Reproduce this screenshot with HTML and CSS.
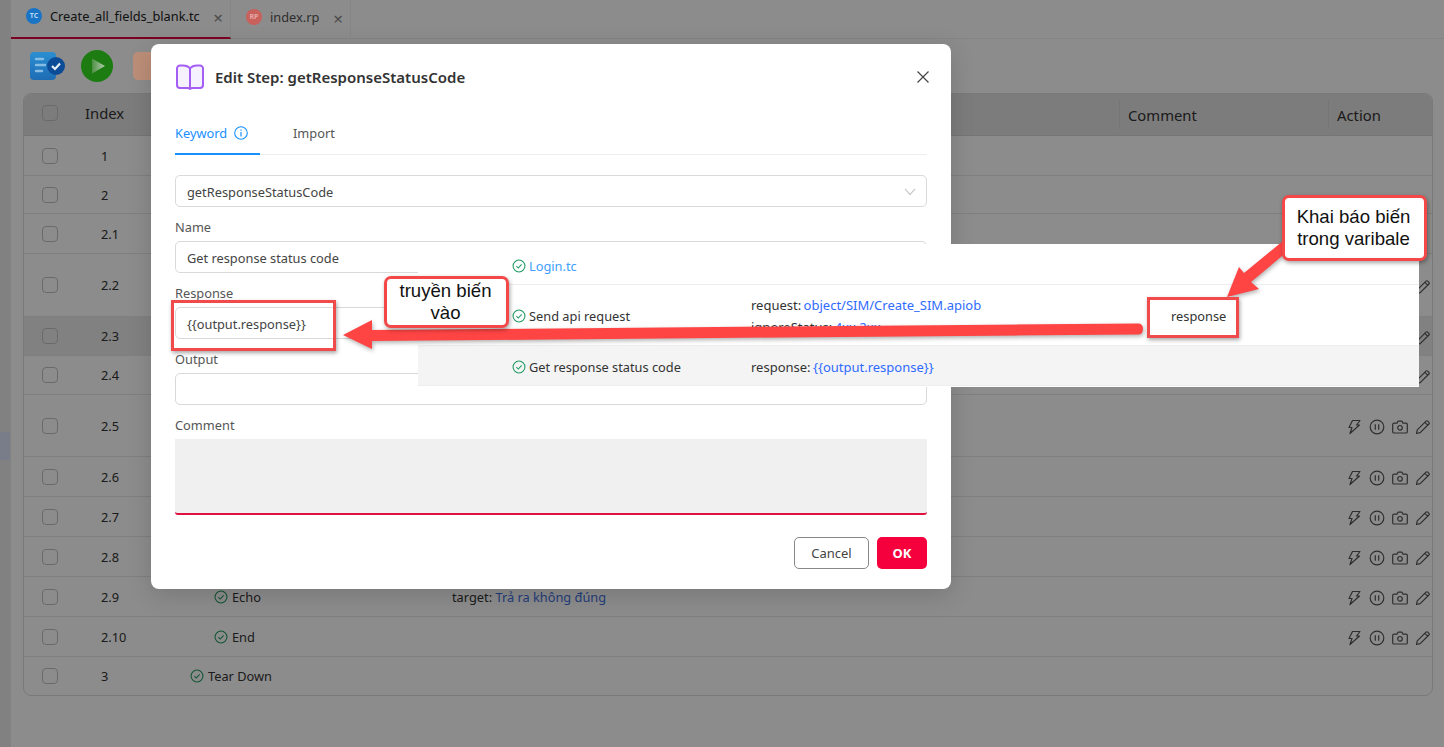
FILE: index.html
```html
<!DOCTYPE html>
<html lang="vi">
<head>
<meta charset="utf-8">
<title>Edit Step</title>
<link rel="stylesheet" href="styles.css">
</head>
<body>
<svg class="defs" width="0" height="0">
	<defs>
		<linearGradient id="play-fill" x1="0" y1="0" x2="1" y2="0">
			<stop offset="0" stop-color="#4e9044"/>
			<stop offset="1" stop-color="#b4ccb0"/>
		</linearGradient>
		<linearGradient id="doc-fill" x1="0" y1="0" x2="0" y2="1">
			<stop offset="0" stop-color="#2c8fd2"/>
			<stop offset="1" stop-color="#1e6cb4"/>
		</linearGradient>
	</defs>
	<symbol id="i-check" viewBox="0 0 16 16">
		<circle cx="8" cy="8" r="6.8" fill="none" stroke="currentColor" stroke-width="1.2"/>
		<path d="M5 8.2l2.2 2.2L11 6.2" fill="none" stroke="currentColor" stroke-width="1.2"/>
	</symbol>
	<symbol id="i-bolt" viewBox="0 0 16 16">
		<path d="M6.5 1.5H14L10.5 6h3L4 14.5l2-6H3z" fill="none" stroke="currentColor" stroke-width="1.2" stroke-linejoin="round"/>
	</symbol>
	<symbol id="i-pause" viewBox="0 0 16 16">
		<circle cx="8" cy="8" r="6.8" fill="none" stroke="currentColor" stroke-width="1.2"/>
		<path d="M6.3 5.2v5.6M9.7 5.2v5.6" fill="none" stroke="currentColor" stroke-width="1.2"/>
	</symbol>
	<symbol id="i-camera" viewBox="0 0 16 16">
		<path d="M2 4.2h3l1-2h4l1 2h3a1.3 1.3 0 0 1 1.300 1.300v7.200a1.300 1.300 0 0 1-1.300 1.300H2a1.300 1.300 0 0 1-1.300-1.300V5.500A1.300 1.300 0 0 1 2 4.200z" fill="none" stroke="currentColor" stroke-width="1.2" stroke-linejoin="round"/>
		<circle cx="8" cy="8.800" r="2.300" fill="none" stroke="currentColor" stroke-width="1.2"/>
	</symbol>
	<symbol id="i-pencil" viewBox="0 0 16 16">
		<path d="M1.500 14.500l.8-3.700 8.700-8.700a1.200 1.200 0 0 1 1.700 0l1.200 1.200a1.200 1.200 0 0 1 0 1.700l-8.700 8.700z M9.800 3.300l2.900 2.900" fill="none" stroke="currentColor" stroke-width="1.2" stroke-linejoin="round"/>
	</symbol>
</svg>

<div class="page">
	<aside class="side"><span class="side-mark"></span></aside>
	<main class="main">
		<nav class="tabs">
			<div class="tab tab-on">
				<span class="badge badge-tc">TC</span>
				<span>Create_all_fields_blank.tc</span>
				<span class="tab-x">×</span>
			</div>
			<div class="tab">
				<span class="badge badge-rp">RP</span>
				<span class="tab-off">index.rp</span>
				<span class="tab-x">×</span>
			</div>
		</nav>
		<div class="toolbar">
			<svg class="tool" width="36" height="30" viewBox="0 0 36 30">
				<rect x="0" y="1" width="26" height="28" rx="4" fill="url(#doc-fill)"/>
				<path d="M6 8h7M6 14h9M6 20h6" stroke="#86bde4" stroke-width="2.400" stroke-linecap="round"/>
				<circle cx="26" cy="15" r="9" fill="#0c4c96"/>
				<path d="M22 15l3 3 5-5.500" fill="none" stroke="#e8eef5" stroke-width="2.200"/>
			</svg>
			<svg class="tool" width="32" height="32" viewBox="0 0 32 32">
				<circle cx="16" cy="16" r="16" fill="#1c7c12"/>
				<path d="M11 8.500l13 7.500-13 7.500z" fill="url(#play-fill)"/>
			</svg>
			<span class="tool tool-box"></span>
		</div>
		<section class="grid">
			<div class="head">
				<div class="cell"><span class="box"></span></div>
				<div class="cell">Index</div>
				<div class="cell head-line">Comment</div>
				<div class="cell head-line">Action</div>
			</div>
			<div class="row"><div class="cell"><span class="box"></span></div><div class="cell idx">1</div></div>
			<div class="row h38"><div class="cell"><span class="box"></span></div><div class="cell idx">2</div></div>
			<div class="row"><div class="cell"><span class="box"></span></div><div class="cell idx">2.1</div></div>
			<div class="row h63">
				<div class="cell"><span class="box"></span></div><div class="cell idx">2.2</div><div></div><div></div><div></div>
				<div class="cell acts"><svg><use href="#i-bolt"/></svg><svg><use href="#i-pause"/></svg><svg><use href="#i-camera"/></svg><svg><use href="#i-pencil"/></svg></div>
			</div>
			<div class="row h39 row-hi">
				<div class="cell"><span class="box"></span></div><div class="cell idx">2.3</div><div></div><div></div><div></div>
				<div class="cell acts"><svg><use href="#i-bolt"/></svg><svg><use href="#i-pause"/></svg><svg><use href="#i-camera"/></svg><svg><use href="#i-pencil"/></svg></div>
			</div>
			<div class="row h39">
				<div class="cell"><span class="box"></span></div><div class="cell idx">2.4</div><div></div><div></div><div></div>
				<div class="cell acts"><svg><use href="#i-bolt"/></svg><svg><use href="#i-pause"/></svg><svg><use href="#i-camera"/></svg><svg><use href="#i-pencil"/></svg></div>
			</div>
			<div class="row h62">
				<div class="cell"><span class="box"></span></div><div class="cell idx">2.5</div><div></div><div></div><div></div>
				<div class="cell acts"><svg><use href="#i-bolt"/></svg><svg><use href="#i-pause"/></svg><svg><use href="#i-camera"/></svg><svg><use href="#i-pencil"/></svg></div>
			</div>
			<div class="row">
				<div class="cell"><span class="box"></span></div><div class="cell idx">2.6</div><div></div><div></div><div></div>
				<div class="cell acts"><svg><use href="#i-bolt"/></svg><svg><use href="#i-pause"/></svg><svg><use href="#i-camera"/></svg><svg><use href="#i-pencil"/></svg></div>
			</div>
			<div class="row">
				<div class="cell"><span class="box"></span></div><div class="cell idx">2.7</div><div></div><div></div><div></div>
				<div class="cell acts"><svg><use href="#i-bolt"/></svg><svg><use href="#i-pause"/></svg><svg><use href="#i-camera"/></svg><svg><use href="#i-pencil"/></svg></div>
			</div>
			<div class="row">
				<div class="cell"><span class="box"></span></div><div class="cell idx">2.8</div><div></div><div></div><div></div>
				<div class="cell acts"><svg><use href="#i-bolt"/></svg><svg><use href="#i-pause"/></svg><svg><use href="#i-camera"/></svg><svg><use href="#i-pencil"/></svg></div>
			</div>
			<div class="row">
				<div class="cell"><span class="box"></span></div><div class="cell idx">2.9</div>
				<div class="cell step step-sub"><svg class="ok"><use href="#i-check"/></svg>Echo</div>
				<div class="cell">target:&nbsp;<span class="link">Trả ra không đúng</span></div><div></div>
				<div class="cell acts"><svg><use href="#i-bolt"/></svg><svg><use href="#i-pause"/></svg><svg><use href="#i-camera"/></svg><svg><use href="#i-pencil"/></svg></div>
			</div>
			<div class="row">
				<div class="cell"><span class="box"></span></div><div class="cell idx">2.10</div>
				<div class="cell step step-sub"><svg class="ok"><use href="#i-check"/></svg>End</div>
				<div></div><div></div>
				<div class="cell acts"><svg><use href="#i-bolt"/></svg><svg><use href="#i-pause"/></svg><svg><use href="#i-camera"/></svg><svg><use href="#i-pencil"/></svg></div>
			</div>
			<div class="row h38 row-last">
				<div class="cell"><span class="box"></span></div><div class="cell idx">3</div>
				<div class="cell step"><svg class="ok"><use href="#i-check"/></svg>Tear Down</div>
			</div>
		</section>
	</main>
</div>

<div class="mask"></div>

<div class="modal">
	<header class="modal-top">
		<svg width="30" height="26" viewBox="0 0 30 26">
			<path d="M15 4.500C13.500 2.500 11 1.500 8 1.500H5a3 3 0 0 0-3 3V21a3 3 0 0 0 3 3h7c1.500 0 2.500.3 3 1 .5-.7 1.500-1 3-1h7a3 3 0 0 0 3-3V4.500a3 3 0 0 0-3-3h-3c-3 0-5.500 1-7 3z" fill="#f6f1ff" stroke="#a45df5" stroke-width="2" stroke-linejoin="round"/>
			<path d="M15 4.500V25" stroke="#a45df5" stroke-width="2"/>
		</svg>
		<h1 class="modal-title">Edit Step: getResponseStatusCode</h1>
		<svg class="modal-x" width="12" height="12" viewBox="0 0 12 12">
			<path d="M.5.5l11 11M11.500.5l-11 11" stroke="#444" stroke-width="1.200"/>
		</svg>
	</header>
	<div class="mtabs">
		<div class="mtab mtab-on">Keyword
			<svg width="14" height="14" viewBox="0 0 14 14">
				<circle cx="7" cy="7" r="6.300" fill="none" stroke="#1890ff" stroke-width="1.100"/>
				<path d="M7 6v4.500M7 3.500v1.300" stroke="#1890ff" stroke-width="1.200"/>
			</svg>
		</div>
		<div class="mtab">Import</div>
	</div>
	<div class="picker">getResponseStatusCode
		<svg width="12" height="8" viewBox="0 0 12 8"><path d="M1 1l5 5.500L11 1" fill="none" stroke="#bbb" stroke-width="1.100"/></svg>
	</div>
	<label class="lbl">Name</label>
	<div class="inp">Get response status code</div>
	<label class="lbl">Response</label>
	<div class="inp">{{output.response}}</div>
	<label class="lbl">Output</label>
	<div class="inp"></div>
	<label class="lbl">Comment</label>
	<div class="memo"></div>
	<footer class="modal-foot">
		<button class="btn">Cancel</button>
		<button class="btn btn-ok">OK</button>
	</footer>
</div>

<div class="paste">
	<div class="p-row p-row1">
		<div class="p-step"><svg class="ok-on"><use href="#i-check"/></svg><span class="p-login">Login.tc</span></div>
	</div>
	<div class="p-row p-row2">
		<div class="p-step"><svg class="ok-on"><use href="#i-check"/></svg>Send api request</div>
		<div class="p-args">
			<div>request: <span class="p-link">object/SIM/Create_SIM.apiob</span></div>
			<div>ignoreStatus: <span class="p-link">4xx,2xx</span></div>
		</div>
		<div class="p-note">response</div>
	</div>
	<div class="p-row p-row3">
		<div class="p-step"><svg class="ok-on"><use href="#i-check"/></svg>Get response status code</div>
		<div class="p-args"><div>response: <span class="p-link">{{output.response}}</span></div></div>
	</div>
</div>

<svg class="marks" width="1444" height="747" viewBox="0 0 1444 747">
	<path d="M343 335L372 320V330L1138 323.500Q1143 323.500 1143 329T1138 334.500L372 341V349Z" fill="#ff4444"/>
	<path d="M1227 297L1239 267L1244 273L1283 241L1288 251L1251 282L1259 289Z" fill="#ff4444"/>
</svg>
<div class="frame frame-in"></div>
<div class="frame frame-out"></div>
<div class="note note-in">truyền biến<br>vào</div>
<div class="note note-out">Khai báo biến<br>trong varibale</div>
</body>
</html>
```

FILE: styles.css
```css
*{
	box-sizing:border-box;
}

body{
	margin:0;
	width:1444px;
	height:747px;
	overflow:hidden;
	position:relative;
	background:#fff;
	font-family:"Noto Sans",sans-serif;
	font-size:12.8px;
	color:#333;
}

.defs{
	position:absolute;
}

.page{
	display:flex;
	height:747px;
}

.side{
	flex:none;
	width:11px;
	background:#ebebeb;
	padding-top:432px;
}

.side-mark{
	display:block;
	width:10px;
	height:28px;
	background:#dce4fa;
}

.main{
	flex:1;
	min-width:0;
	padding-right:11px;
}

/* tabs */
.tabs{
	display:flex;
	height:39px;
	margin-right:-11px;
	border-bottom:1px solid #f0f0f0;
}

.tab{
	display:flex;
	align-items:center;
	height:39px;
	padding:0 7px 5px 15px;
	gap:8px;
	width:120px;
	border-right:1px solid #f4f4f4;
	font-size:12.8px;
}

.tab-on{
	width:220px;
	border-bottom:2px solid #e0003c;
	color:#222;
}

.tab-off{
	color:#555;
}

.tab-x{
	margin-left:auto;
	margin-top:3px;
	font-size:17px;
	color:#888;
}

.badge{
	flex:none;
	position:relative;
	z-index:2;
	width:16px;
	height:16px;
	line-height:16px;
	border-radius:50%;
	font-size:7px;
	font-weight:700;
	text-align:center;
	color:#b9d6f0;
}

.badge-tc{
	background:#1a74c6;
}

.badge-rp{
	background:#c8605c;
	color:#e6a8a4;
}

/* toolbar */
.toolbar{
	display:flex;
	align-items:center;
	height:54px;
	padding-left:19px;
	gap:15px;
}

.tool{
	position:relative;
	z-index:2;
}

.tool-box{
	width:30px;
	height:28px;
	margin-left:5px;
	border-radius:5px;
	background:#bc8e78;
}

/* table */
.grid{
	margin-left:12px;
	border:1px solid #dcdcdc;
	border-radius:8px;
}

.head{
	display:grid;
	grid-template-columns:61px 1034px 209px 104px;
	height:42px;
	padding-bottom:4px;
	background:#e2e2e2;
	border-radius:8px 8px 0 0;
	border-bottom:1px solid #d6d6d6;
	font-size:14.8px;
	color:#333;
}

.head-line{
	padding-left:8px;
	border-left:1px solid #d6d6d6;
	margin:6px 0 2px;
}

.row{
	display:grid;
	grid-template-columns:61px 105px 262px 667px 209px 104px;
	height:40px;
	border-bottom:1px solid #e8e8e8;
}

.h38{
	height:38px;
}

.h39{
	height:39px;
}

.h62{
	height:62px;
}

.h63{
	height:63px;
}

.row-hi{
	background:#ececec;
}

.row-last{
	border-bottom:0;
}

.cell{
	display:flex;
	align-items:center;
	min-width:0;
}

.box{
	width:16px;
	height:16px;
	margin-left:18px;
	border:1px solid #c2c2c2;
	border-radius:4px;
}

.idx{
	padding-left:16px;
}

.step{
	gap:4px;
}

.step-sub{
	padding-left:24px;
}

.ok{
	width:14px;
	height:14px;
	color:#1e9a60;
}

.link{
	color:#3f6fe0;
}

.acts{
	padding:3px 0 0 18px;
	gap:7px;
	color:#555;
}

.acts svg{
	width:16px;
	height:16px;
}

.mask{
	position:absolute;
	left:0;
	top:0;
	z-index:1;
	width:1444px;
	height:747px;
	background:rgba(0,0,0,.45);
}

/* dialog */
.modal{
	position:absolute;
	left:151px;
	top:44px;
	z-index:3;
	width:800px;
	height:545px;
	padding:20px 24px;
	border-radius:8px;
	background:#fff;
	box-shadow:0 6px 24px rgba(0,0,0,.15);
}

.modal-top{
	display:flex;
	align-items:center;
	height:26px;
	gap:10px;
}

.modal-title{
	margin:0;
	font-size:15px;
	font-weight:600;
	color:#333;
}

.modal-x{
	margin-left:auto;
	margin-right:-2px;
}

.mtabs{
	display:flex;
	height:45px;
	margin-top:20px;
	gap:33px;
	border-bottom:1px solid #eee;
}

.mtab{
	display:flex;
	align-items:center;
	height:45px;
	gap:7px;
	color:#555;
}

.mtab-on{
	width:85px;
	height:45px;
	padding-top:2px;
	color:#1890ff;
	border-bottom:2px solid #1890ff;
}

.picker,.inp{
	display:flex;
	align-items:center;
	justify-content:space-between;
	height:32px;
	padding:1px 11px 0;
	border:1px solid #d9d9d9;
	border-radius:5px;
	color:#444;
}

.picker{
	margin-top:20px;
	padding-right:10px;
}

.lbl{
	display:block;
	height:21px;
	margin-top:13px;
	line-height:15px;
	color:#555;
}

.memo{
	height:76px;
	background:#f0f0f0;
	border-bottom:2px solid #e0103f;
	border-radius:0 0 3px 3px;
}

.modal-foot{
	display:flex;
	justify-content:flex-end;
	margin-top:22px;
	gap:8px;
}

.btn{
	width:75px;
	height:32px;
	border:1px solid #888;
	border-radius:5px;
	background:#fff;
	font-family:inherit;
	font-size:13px;
	color:#444;
}

.btn-ok{
	width:50px;
	border:0;
	background:#f5003d;
	color:#fff;
	font-weight:700;
}

/* pasted picture of the step list */
.paste{
	position:absolute;
	left:418px;
	top:244px;
	z-index:3;
	width:1001px;
	height:143px;
	background:#fff;
}

.p-row{
	display:flex;
	align-items:center;
	padding-left:94px;
	border-bottom:1px solid #eee;
}

.p-row1{
	height:41px;
	padding-top:4px;
}

.p-row2{
	height:61px;
	padding-top:2px;
}

.p-row3{
	height:40px;
	padding-top:2px;
	background:#f4f4f4;
}

.p-step{
	display:flex;
	align-items:center;
	width:239px;
	gap:3px;
}

.ok-on{
	width:14px;
	height:14px;
	color:#1e9a60;
}

.p-login{
	color:#40a0ff;
}

.p-args{
	width:420px;
	font-size:13px;
	line-height:22px;
	word-spacing:-1px;
}

.p-link{
	color:#2f6bff;
}

.p-note{
	color:#333;
}

.marks{
	position:absolute;
	left:0;
	top:0;
	z-index:3;
	filter:drop-shadow(1px 2px 2px rgba(0,0,0,.3));
}

.frame{
	position:absolute;
	z-index:3;
	border:3px solid #f04a4a;
	box-shadow:1px 2px 4px rgba(0,0,0,.35);
}

.frame-in{
	left:171px;
	top:300px;
	width:165px;
	height:51px;
}

.frame-out{
	left:1147px;
	top:297px;
	width:92px;
	height:41px;
}

.note{
	position:absolute;
	z-index:3;
	display:flex;
	align-items:center;
	justify-content:center;
	padding-right:2px;
	border:3px solid #f44848;
	border-radius:7px;
	background:#fff;
	box-shadow:1px 2px 4px rgba(0,0,0,.35);
	font-family:"Liberation Sans",Arial,sans-serif;
	font-size:18.6px;
	line-height:22px;
	text-align:center;
	color:#111;
}

.note-in{
	left:384px;
	top:276px;
	width:125px;
	height:52px;
}

.note-out{
	left:1282px;
	top:195px;
	width:145px;
	height:66px;
}
```
